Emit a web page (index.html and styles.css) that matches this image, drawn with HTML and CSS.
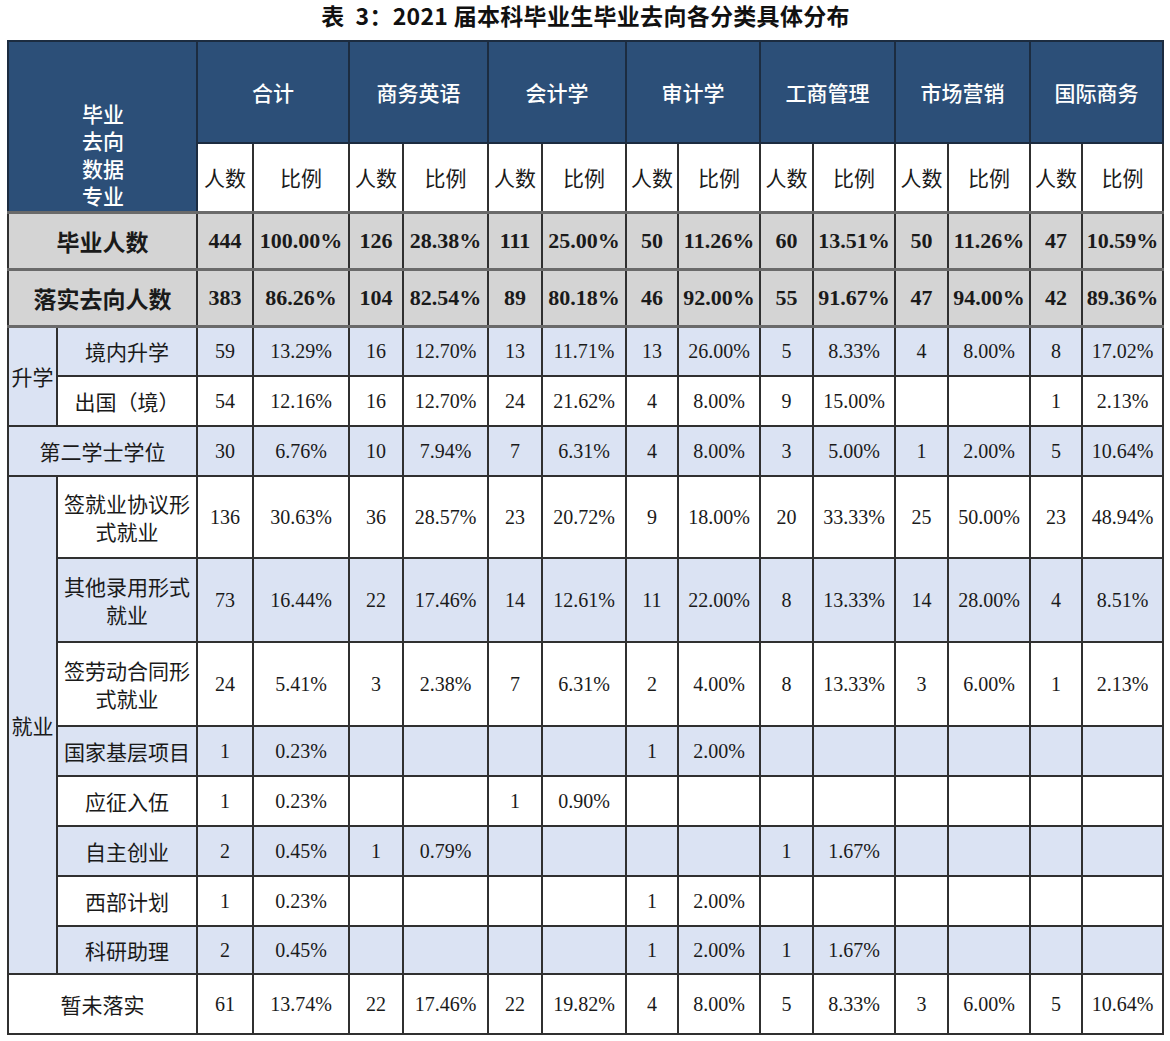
FILE: index.html
```html
<!DOCTYPE html>
<html lang="zh-CN">
<head>
<meta charset="utf-8">
<title>表 3：2021 届本科毕业生毕业去向各分类具体分布</title>
<link rel="stylesheet" href="styles.css">
</head>
<body>
<div class="page">
  <h1 class="title">表&nbsp;&nbsp;3：2021 届本科毕业生毕业去向各分类具体分布</h1>
  <table class="grid">
    <colgroup>
      <col class="c-cat"><col class="c-sub">
      <col class="c-n56"><col class="c-p96">
      <col class="c-n54"><col class="c-p85">
      <col class="c-n54"><col class="c-p84">
      <col class="c-n52"><col class="c-p82">
      <col class="c-n53"><col class="c-p82">
      <col class="c-n53"><col class="c-p82">
      <col class="c-n52"><col class="c-p81">
    </colgroup>
    <thead>
      <tr class="h1">
        <th class="hd corner" colspan="2" rowspan="2"><div class="corner-text">毕业<br>去向<br>数据<br>专业</div></th>
        <th class="hd" colspan="2">合计</th>
        <th class="hd" colspan="2">商务英语</th>
        <th class="hd" colspan="2">会计学</th>
        <th class="hd" colspan="2">审计学</th>
        <th class="hd" colspan="2">工商管理</th>
        <th class="hd" colspan="2">市场营销</th>
        <th class="hd" colspan="2">国际商务</th>
      </tr>
      <tr class="h2">
        <th class="sub">人数</th><th class="sub">比例</th>
        <th class="sub">人数</th><th class="sub">比例</th>
        <th class="sub">人数</th><th class="sub">比例</th>
        <th class="sub">人数</th><th class="sub">比例</th>
        <th class="sub">人数</th><th class="sub">比例</th>
        <th class="sub">人数</th><th class="sub">比例</th>
        <th class="sub">人数</th><th class="sub">比例</th>
      </tr>
    </thead>
    <tbody>
      <tr class="sum r57">
        <td class="lab" colspan="2">毕业人数</td>
        <td>444</td><td>100.00%</td><td>126</td><td>28.38%</td><td>111</td><td>25.00%</td><td>50</td><td>11.26%</td><td>60</td><td>13.51%</td><td>50</td><td>11.26%</td><td>47</td><td>10.59%</td>
      </tr>
      <tr class="sum r57">
        <td class="lab" colspan="2">落实去向人数</td>
        <td>383</td><td>86.26%</td><td>104</td><td>82.54%</td><td>89</td><td>80.18%</td><td>46</td><td>92.00%</td><td>55</td><td>91.67%</td><td>47</td><td>94.00%</td><td>42</td><td>89.36%</td>
      </tr>
      <tr class="blue r50">
        <td class="lab cat" rowspan="2">升学</td>
        <td class="lab">境内升学</td>
        <td>59</td><td>13.29%</td><td>16</td><td>12.70%</td><td>13</td><td>11.71%</td><td>13</td><td>26.00%</td><td>5</td><td>8.33%</td><td>4</td><td>8.00%</td><td>8</td><td>17.02%</td>
      </tr>
      <tr class="white r50">
        <td class="lab">出国（境）</td>
        <td>54</td><td>12.16%</td><td>16</td><td>12.70%</td><td>24</td><td>21.62%</td><td>4</td><td>8.00%</td><td>9</td><td>15.00%</td><td></td><td></td><td>1</td><td>2.13%</td>
      </tr>
      <tr class="blue r50">
        <td class="lab" colspan="2">第二学士学位</td>
        <td>30</td><td>6.76%</td><td>10</td><td>7.94%</td><td>7</td><td>6.31%</td><td>4</td><td>8.00%</td><td>3</td><td>5.00%</td><td>1</td><td>2.00%</td><td>5</td><td>10.64%</td>
      </tr>
      <tr class="white r82">
        <td class="lab cat" rowspan="8">就业</td>
        <td class="lab wrap">签就业协议形式就业</td>
        <td>136</td><td>30.63%</td><td>36</td><td>28.57%</td><td>23</td><td>20.72%</td><td>9</td><td>18.00%</td><td>20</td><td>33.33%</td><td>25</td><td>50.00%</td><td>23</td><td>48.94%</td>
      </tr>
      <tr class="blue r84">
        <td class="lab wrap">其他录用形式就业</td>
        <td>73</td><td>16.44%</td><td>22</td><td>17.46%</td><td>14</td><td>12.61%</td><td>11</td><td>22.00%</td><td>8</td><td>13.33%</td><td>14</td><td>28.00%</td><td>4</td><td>8.51%</td>
      </tr>
      <tr class="white r84">
        <td class="lab wrap">签劳动合同形式就业</td>
        <td>24</td><td>5.41%</td><td>3</td><td>2.38%</td><td>7</td><td>6.31%</td><td>2</td><td>4.00%</td><td>8</td><td>13.33%</td><td>3</td><td>6.00%</td><td>1</td><td>2.13%</td>
      </tr>
      <tr class="blue r50">
        <td class="lab">国家基层项目</td>
        <td>1</td><td>0.23%</td><td></td><td></td><td></td><td></td><td>1</td><td>2.00%</td><td></td><td></td><td></td><td></td><td></td><td></td>
      </tr>
      <tr class="white r50">
        <td class="lab">应征入伍</td>
        <td>1</td><td>0.23%</td><td></td><td></td><td>1</td><td>0.90%</td><td></td><td></td><td></td><td></td><td></td><td></td><td></td><td></td>
      </tr>
      <tr class="blue r50">
        <td class="lab">自主创业</td>
        <td>2</td><td>0.45%</td><td>1</td><td>0.79%</td><td></td><td></td><td></td><td></td><td>1</td><td>1.67%</td><td></td><td></td><td></td><td></td>
      </tr>
      <tr class="white r50">
        <td class="lab">西部计划</td>
        <td>1</td><td>0.23%</td><td></td><td></td><td></td><td></td><td>1</td><td>2.00%</td><td></td><td></td><td></td><td></td><td></td><td></td>
      </tr>
      <tr class="blue r48">
        <td class="lab">科研助理</td>
        <td>2</td><td>0.45%</td><td></td><td></td><td></td><td></td><td>1</td><td>2.00%</td><td>1</td><td>1.67%</td><td></td><td></td><td></td><td></td>
      </tr>
      <tr class="white r60">
        <td class="lab" colspan="2">暂未落实</td>
        <td>61</td><td>13.74%</td><td>22</td><td>17.46%</td><td>22</td><td>19.82%</td><td>4</td><td>8.00%</td><td>5</td><td>8.33%</td><td>3</td><td>6.00%</td><td>5</td><td>10.64%</td>
      </tr>
    </tbody>
  </table>
</div>
</body>
</html>
```

FILE: styles.css
```css
html, body {
  margin: 0;
  padding: 0;
  background: #ffffff;
}

.page {
  width: 1170px;
  padding-left: 7px;
  box-sizing: border-box;
}

.title {
  margin: 0;
  height: 40px;
  line-height: 30px;
  width: 1157px;
  text-align: center;
  font-family: "Noto Sans CJK SC", "Noto Sans", sans-serif;
  font-size: 23px;
  font-weight: 700;
  letter-spacing: 0.3px;
  color: #111;
}

.grid {
  width: 1155px;
  table-layout: fixed;
  border-collapse: collapse;
  font-family: "Liberation Serif", "Noto Sans CJK SC", serif;
  font-size: 20px;
  color: #1a1a1a;
}

.c-cat { width: 49px; }
.c-sub { width: 140px; }
.c-n56 { width: 56px; }
.c-p96 { width: 96px; }
.c-n54 { width: 54px; }
.c-p85 { width: 85px; }
.c-p84 { width: 84px; }
.c-n52 { width: 52px; }
.c-p82 { width: 82px; }
.c-n53 { width: 53px; }
.c-p81 { width: 81px; }

.grid th,
.grid td {
  border: 2px solid #303030;
  padding: 0;
  text-align: center;
  vertical-align: middle;
  white-space: nowrap;
  overflow: hidden;
}

.h1 { height: 102px; }
.h2 { height: 69px; }
.r57 { height: 57px; }
.r50 { height: 50px; }
.r48 { height: 48px; }
.r60 { height: 60px; }
.r82 { height: 82px; }
.r84 { height: 84px; }

.grid .hd {
  background: #2c4f78;
  color: #ffffff;
  font-family: "Noto Sans CJK SC", "Noto Sans", sans-serif;
  font-size: 21px;
  font-weight: 500;
  border-color: #1c2c40;
}

.grid th.corner {
  text-align: left;
  vertical-align: bottom;
}

.corner-text {
  padding-left: 73px;
  padding-bottom: 1px;
  line-height: 27.5px;
}

.grid .sub {
  background: #ffffff;
  color: #1a1a1a;
  font-family: "Noto Sans CJK SC", "Noto Sans", sans-serif;
  font-size: 21px;
  font-weight: 400;
}

.sum td {
  background: #d4d4d4;
  font-weight: 700;
  font-size: 22px;
  border-top: 3px solid #6a6a6a;
  border-bottom: 3px solid #6a6a6a;
}

.sum .lab {
  font-family: "Noto Sans CJK SC", "Noto Sans", sans-serif;
  font-size: 23px;
  font-weight: 700;
}

.blue td { background: #dbe3f3; }
.white td { background: #ffffff; }
.grid td.cat { background: #dbe3f3; }

.lab {
  font-family: "Noto Sans CJK SC", "Noto Sans", sans-serif;
  font-size: 21px;
  color: #1a1a1a;
}

.grid td.wrap {
  white-space: normal;
  line-height: 28px;
  padding: 0 4px;
}
```
